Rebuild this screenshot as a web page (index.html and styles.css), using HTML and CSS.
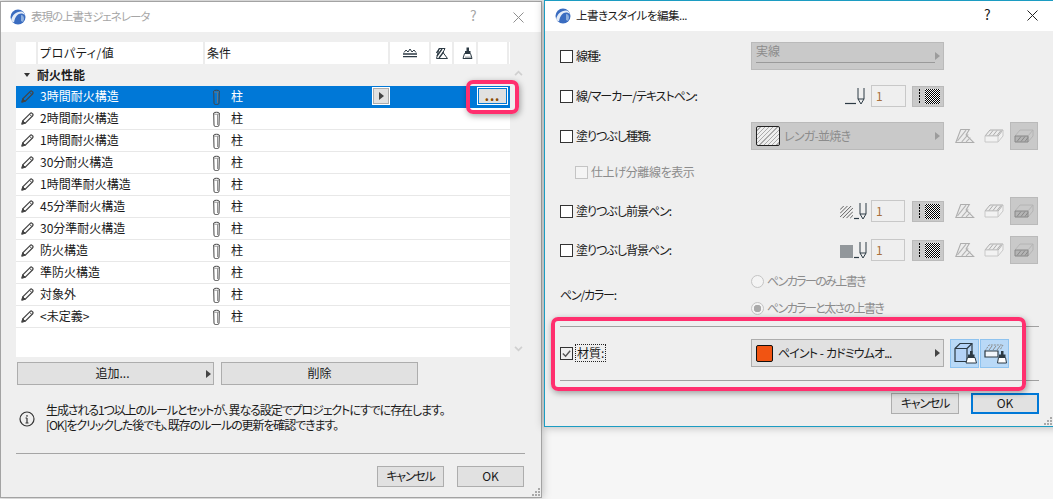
FILE: index.html
```html
<!DOCTYPE html>
<html lang="ja">
<head>
<meta charset="utf-8">
<title>表現の上書きジェネレータ</title>
<link rel="stylesheet" href="styles.css">
</head>
<body>
<svg class="sprite" width="0" height="0">
  <defs>
    <symbol id="logo" viewBox="0 0 16 16">
      <circle cx="8" cy="8" r="7.500" fill="#3a6cc0"/>
      <path d="M1 12C2 6 6 2.500 11 2.500c2 0 3.500 1.500 4 4-1-1.500-2.500-2-4-2-3 0-6 3-7 9z" fill="#e4ecf7"/>
      <path d="M11 6c2 0 3 1.500 3 4l-1 3-2-1z" fill="#8fb0dd"/>
    </symbol>
    <symbol id="x" viewBox="0 0 11 11">
      <path d="M.5.500l10 10M10.500.500l-10 10" fill="none" stroke="currentColor" stroke-width="1"/>
    </symbol>
    <symbol id="pencil" viewBox="0 0 13 13">
      <path d="M1 12l.8-3.200L9.300 1.300a1.200 1.200 0 0 1 1.700 0l.7.700a1.200 1.200 0 0 1 0 1.700L4.200 11.200z" fill="none" stroke="#444" stroke-width="1.200"/>
      <path d="M1 12l.8-3.200 2.400 2.400zM8.500 2.200l2.300 2.300" fill="#444" stroke="#444"/>
    </symbol>
    <symbol id="column" viewBox="0 0 7 16">
      <path d="M.7 2c0-1 5.600-1 5.600 0l-.3 12c0 1.500-1.200 1.500-2.500 1.500S1 15.500 1 14z" fill="none" stroke="#444" stroke-width="1"/>
      <path d="M1 2.800c1 .7 4 .7 5 0M4.500 3.500V14" fill="none" stroke="#777" stroke-width=".8"/>
    </symbol>
    <symbol id="line-tool" viewBox="0 0 14 10">
      <path d="M1 4.500l2-2.500 2 2 2-3 2 3 2-2 2 2.500" fill="none" stroke="#2c3a44" stroke-width="1"/>
      <path d="M0 6h14M0 8.700h14" stroke="#2c3a44" stroke-width="1.300"/>
    </symbol>
    <symbol id="surface" viewBox="0 0 12 11">
      <path d="M3 .5h6l-2 4 4.500 6H.5z" fill="#fff" stroke="#2c3a44"/>
      <path d="M1 8l5-7M3 10l4.500-6M.5 5l3-4.500" stroke="#2c3a44" stroke-width="1.300"/>
    </symbol>
    <symbol id="brush" viewBox="0 0 11 12">
      <path d="M4.500.5h2.500v3.500h1.500v2h-5.500V4h1.500z" fill="#2c3a44"/>
      <path d="M2.500 6.500h6l1.500 5H1z" fill="#fff" stroke="#2c3a44"/>
      <path d="M4 9.500v2M6 9.500v2M8 9.500v2" stroke="#2c3a44" stroke-width=".8"/>
    </symbol>
    <symbol id="pen" viewBox="0 0 20 18">
      <path d="M0 16.500h11" stroke="#2c3a44" stroke-width="1.200"/>
      <path d="M13 1v11h6V1M13 12l3 5 3-5" fill="none" stroke="#2c3a44"/>
    </symbol>
    <symbol id="pen-short" viewBox="0 0 13 18">
      <path d="M0 16.500h5" stroke="#2c3a44" stroke-width="1.200"/>
      <path d="M6 1v11h6V1M6 12l3 5 3-5" fill="none" stroke="#2c3a44"/>
    </symbol>
    <symbol id="hatch-lines" viewBox="0 0 14 14">
      <path d="M0 4l4-4M0 8l8-8M0 12L12 0M3 13L14 2M7 13l7-7M11 13l3-3" stroke="#555" stroke-width="1"/>
    </symbol>
    <symbol id="shape-a" viewBox="0 0 18 13">
      <path d="M5 .5h8l-3 5 7 7H.5z" fill="#ececec" stroke="#adadad"/>
      <path d="M2 11l8-10M6 12l6-7M10 12l4-4" stroke="#b4b4b4"/>
    </symbol>
    <symbol id="shape-b" viewBox="0 0 20 13">
      <path d="M1 6.500L6 .5h13l-5 6z" fill="#ececec" stroke="#adadad"/>
      <path d="M1 6.500h13v6H1zM14 12.500l5-6V.5" fill="#f2f2f2" stroke="#c8c8c8"/>
      <path d="M5 6l4-5M9 6l4-5M13 6l4-5" stroke="#adadad"/>
    </symbol>
    <symbol id="shape-c" viewBox="0 0 20 13">
      <path d="M1 6.500L6 .5h13l-5 6" fill="none" stroke="#b4b4b4"/>
      <path d="M14 12.500l5-6V.5" fill="none" stroke="#b4b4b4"/>
      <path d="M1 6.500h13v6H1z" fill="#b4b4b4" stroke="#888"/>
      <path d="M3 12l4-5M7 12l4-5M11 12l3-4" stroke="#888"/>
    </symbol>
    <symbol id="box-brush" viewBox="0 0 24 24">
      <path d="M2 7.500L7 2.500h12v13l-5 5H2z" fill="#b5d3f7" stroke="#2c3a44" stroke-width="1.200"/>
      <path d="M2 7.500h12v13M14 7.500l5-5" fill="none" stroke="#2c3a44" stroke-width="1.200"/>
      <path d="M17 10h2.500v3.500h2v2.500h-6.500v-2.500h2z" fill="#2c3a44"/>
      <path d="M14.500 16.500h7.500l1.500 5.500h-10.500z" fill="#fff" stroke="#2c3a44"/>
    </symbol>
    <symbol id="slab-brush" viewBox="0 0 24 24">
      <path d="M2 10L6 4h14l-3 5" fill="none" stroke="#8a8a8a" stroke-dasharray="2 1"/>
      <path d="M6 9l3-4M10 9l3-4M14 9l3-4" stroke="#8a8a8a"/>
      <path d="M2 10h13v6H2z" fill="#f2f6fb" stroke="#2c3a44" stroke-width="1.200"/>
      <path d="M18 10h2.500v3.500h2v2.500H16v-2.500h2z" fill="#2c3a44"/>
      <path d="M15.500 16.500H22.500l1 5.500H14.500z" fill="#fff" stroke="#2c3a44"/>
    </symbol>
    <symbol id="grip" viewBox="0 0 9 9">
      <path d="M7 1h2v2H7zM4 4h2v2H4zM7 4h2v2H7zM1 7h2v2H1zM4 7h2v2H4zM7 7h2v2H7z" fill="#a9a9a9"/>
    </symbol>
  </defs>
</svg>

<section class="window win-main">
  <header class="titlebar">
    <svg class="logo"><use href="#logo"/></svg>
    <span class="title title-muted">表現の上書きジェネレータ</span>
    <span class="help help-main">?</span>
    <svg class="close close-main"><use href="#x"/></svg>
  </header>
  <div class="main-body">
    <div class="list-area">
      <div class="list">
        <div class="list-head">
          <span class="hcell hc-icon"></span>
          <span class="hcell hc-name">プロパティ/値</span>
          <span class="hcell hc-cond">条件</span>
          <span class="hcell hc-a"><svg class="hi-line"><use href="#line-tool"/></svg></span>
          <span class="hcell hc-b"><svg class="hi-surface"><use href="#surface"/></svg></span>
          <span class="hcell hc-c"><svg class="hi-brush"><use href="#brush"/></svg></span>
          <span class="hcell hc-d"></span>
        </div>
        <div class="group-row"><span class="tri-down"></span><span class="txt">耐火性能</span></div>
        <div class="row row-selected">
          <svg class="pencil"><use href="#pencil"/></svg>
          <span class="name">3時間耐火構造</span>
          <svg class="column"><use href="#column"/></svg>
          <span class="cond">柱</span>
          <span class="row-arrow"><i class="tri-right tri-dark"></i></span>
          <span class="row-more"><b>...</b></span>
        </div>
        <div class="row"><svg class="pencil"><use href="#pencil"/></svg><span class="name">2時間耐火構造</span><svg class="column"><use href="#column"/></svg><span class="cond">柱</span></div>
        <div class="row"><svg class="pencil"><use href="#pencil"/></svg><span class="name">1時間耐火構造</span><svg class="column"><use href="#column"/></svg><span class="cond">柱</span></div>
        <div class="row"><svg class="pencil"><use href="#pencil"/></svg><span class="name">30分耐火構造</span><svg class="column"><use href="#column"/></svg><span class="cond">柱</span></div>
        <div class="row"><svg class="pencil"><use href="#pencil"/></svg><span class="name">1時間準耐火構造</span><svg class="column"><use href="#column"/></svg><span class="cond">柱</span></div>
        <div class="row"><svg class="pencil"><use href="#pencil"/></svg><span class="name">45分準耐火構造</span><svg class="column"><use href="#column"/></svg><span class="cond">柱</span></div>
        <div class="row"><svg class="pencil"><use href="#pencil"/></svg><span class="name">30分準耐火構造</span><svg class="column"><use href="#column"/></svg><span class="cond">柱</span></div>
        <div class="row"><svg class="pencil"><use href="#pencil"/></svg><span class="name">防火構造</span><svg class="column"><use href="#column"/></svg><span class="cond">柱</span></div>
        <div class="row"><svg class="pencil"><use href="#pencil"/></svg><span class="name">準防火構造</span><svg class="column"><use href="#column"/></svg><span class="cond">柱</span></div>
        <div class="row"><svg class="pencil"><use href="#pencil"/></svg><span class="name">対象外</span><svg class="column"><use href="#column"/></svg><span class="cond">柱</span></div>
        <div class="row"><svg class="pencil"><use href="#pencil"/></svg><span class="name">&lt;未定義&gt;</span><svg class="column"><use href="#column"/></svg><span class="cond">柱</span></div>
      </div>
      <div class="scroll">
        <svg class="chev" viewBox="0 0 10 7"><path d="M1 6l4-4 4 4" fill="none" stroke="#d0d0d0" stroke-width="2"/></svg>
        <svg class="chev" viewBox="0 0 10 7"><path d="M1 1l4 4 4-4" fill="none" stroke="#d0d0d0" stroke-width="2"/></svg>
      </div>
    </div>
    <div class="list-actions">
      <button class="btn btn-wide btn-add">追加...<i class="tri-right tri-dark tri-add"></i></button>
      <button class="btn btn-wide">削除</button>
    </div>
    <div class="notice">
      <svg class="info" viewBox="0 0 16 16"><circle cx="8" cy="8" r="7" fill="none" stroke="#333" stroke-width="1.200"/><path d="M8 4v1.800M8 7v5M6.500 7H8M6.500 12h3" fill="none" stroke="#333" stroke-width="1.200"/></svg>
      <p class="notice-text">生成される1つ以上のルールとセットが、異なる設定でプロジェクトにすでに存在します。<br>[OK]をクリックした後でも、既存のルールの更新を確認できます。</p>
    </div>
    <div class="main-footer">
      <button class="btn btn-foot btn-kana">キャンセル</button>
      <button class="btn btn-foot">OK</button>
    </div>
  </div>
  <svg class="grip"><use href="#grip"/></svg>
</section>

<div class="highlight hl-more"></div>

<section class="window win-edit">
  <header class="titlebar">
    <svg class="logo logo-edit"><use href="#logo"/></svg>
    <span class="title title-edit">上書きスタイルを編集...</span>
    <span class="help help-edit">?</span>
    <svg class="close close-edit"><use href="#x"/></svg>
  </header>
  <div class="edit-body">
    <div class="frow f1">
      <label class="flabel"><i class="check"></i><span class="txt">線種:</span></label>
      <div class="select select-line"><span class="select-text">実線</span><i class="tri-right tri-light tri-end"></i></div>
    </div>
    <div class="frow f2">
      <label class="flabel"><i class="check"></i><span class="txt">線/マーカー/テキストペン:</span></label>
      <div class="pen-group">
        <svg class="pen"><use href="#pen"/></svg>
        <span class="pen-num">1</span>
        <span class="pen-swatch"><i class="dots"></i><i class="checker"></i></span>
      </div>
    </div>
    <div class="frow f3">
      <label class="flabel"><i class="check"></i><span class="txt">塗りつぶし種類:</span></label>
      <div class="select"><i class="fill-swatch"></i><span class="select-text text-fill">レンガ-並焼き</span><i class="tri-right tri-light tri-end"></i></div>
      <div class="shapes">
        <svg class="shape"><use href="#shape-a"/></svg>
        <svg class="shape"><use href="#shape-b"/></svg>
        <span class="shape-on"><svg class="shape"><use href="#shape-c"/></svg></span>
      </div>
    </div>
    <div class="frow f4">
      <label class="flabel sublabel"><i class="check check-off"></i><span class="txt txt-sub">仕上げ分離線を表示</span></label>
    </div>
    <div class="frow f5">
      <label class="flabel"><i class="check"></i><span class="txt">塗りつぶし前景ペン:</span></label>
      <div class="pen-group pen-group-s">
        <svg class="hatch"><use href="#hatch-lines"/></svg>
        <svg class="pen-s"><use href="#pen-short"/></svg>
        <span class="pen-num pen-num-s">1</span>
        <span class="pen-swatch pen-swatch-s"><i class="dots"></i><i class="checker"></i></span>
      </div>
      <div class="shapes">
        <svg class="shape"><use href="#shape-a"/></svg>
        <svg class="shape"><use href="#shape-b"/></svg>
        <span class="shape-on"><svg class="shape"><use href="#shape-c"/></svg></span>
      </div>
    </div>
    <div class="frow f6">
      <label class="flabel"><i class="check"></i><span class="txt">塗りつぶし背景ペン:</span></label>
      <div class="pen-group pen-group-s">
        <i class="solid"></i>
        <svg class="pen-s"><use href="#pen-short"/></svg>
        <span class="pen-num pen-num-s">1</span>
        <span class="pen-swatch pen-swatch-s"><i class="dots"></i><i class="checker"></i></span>
      </div>
      <div class="shapes">
        <svg class="shape"><use href="#shape-a"/></svg>
        <svg class="shape"><use href="#shape-b"/></svg>
        <span class="shape-on"><svg class="shape"><use href="#shape-c"/></svg></span>
      </div>
    </div>
    <div class="frow f7">
      <span class="flabel plain"><span class="txt txt-plain">ペン/カラー:</span></span>
      <div class="radios">
        <span class="radio-line"><i class="radio"></i><span class="txt txt-radio">ペンカラーのみ上書き</span></span>
        <span class="radio-line"><i class="radio radio-on"></i><span class="txt txt-radio">ペンカラーと太さの上書き</span></span>
      </div>
    </div>
    <hr class="sep sep-a">
    <div class="frow f8">
      <label class="flabel"><i class="check check-on"><svg viewBox="0 0 12 12"><path d="M2 6l3 3 5-6" fill="none" stroke="#555" stroke-width="1.500"/></svg></i><span class="txt focus">材質:</span></label>
      <div class="select select-on"><i class="color-swatch"></i><span class="select-text text-on">ペイント - カドミウムオ...</span><i class="tri-right tri-dark tri-end"></i></div>
      <div class="toggles">
        <span class="toggle"><svg class="toggle-icon"><use href="#box-brush"/></svg></span>
        <span class="toggle"><svg class="toggle-icon"><use href="#slab-brush"/></svg></span>
      </div>
    </div>
    <hr class="sep sep-b">
    <div class="edit-footer">
      <button class="btn btn-foot btn-edit btn-kana">キャンセル</button>
      <button class="btn btn-foot btn-edit btn-default">OK</button>
    </div>
  </div>
  <svg class="grip"><use href="#grip"/></svg>
</section>

<div class="highlight hl-material"></div>
</body>
</html>
```
FILE: styles.css
```css
* { box-sizing: border-box; }
html, body { margin: 0; height: 100%; }
body {
  position: relative;
  width: 1053px;
  height: 499px;
  overflow: hidden;
  background: #f6f6f6;
  font-family: "Noto Sans CJK JP", "Noto Sans", sans-serif;
  font-size: 12px;
  line-height: 15px;
  color: #1a1a1a;
  font-feature-settings: "palt";
}
.sprite { position: absolute; }
i { display: block; font-style: normal; }
.txt { padding-bottom: 2px; }

.window {
  position: absolute;
  display: flex;
  flex-direction: column;
  background: #efefef;
  box-shadow: 0 0 9px rgba(0, 0, 0, .28);
}
.win-main { left: 0; top: 1px; width: 542px; height: 497px; border: 1px solid #a3a3a3; }
.win-edit { left: 544px; top: 0; width: 520px; height: 427px; border: 1px solid #1c9cc2; }

.titlebar {
  position: relative;
  flex: none;
  display: flex;
  align-items: center;
  height: 30px;
  background: #fff;
  font-size: 11.500px;
}
.logo { width: 16px; height: 16px; margin-left: 9px; }
.logo-edit { margin-left: 10px; }
.title { margin-left: 5px; padding-bottom: 2px; letter-spacing: -.5px; }
.title-muted { color: #a6a6a6; letter-spacing: -1px; }
.help, .close { position: absolute; }
.help { top: 6px; font-size: 14px; }
.close { width: 11px; height: 11px; top: 10px; }
.help-main { left: 469px; color: #a6a6a6; }
.close-main { left: 512px; color: #8f8f8f; }
.help-edit { left: 439px; }
.close-edit { left: 482px; top: 9px; color: #222; }

/* main dialog */
.main-body { flex: 1; display: flex; flex-direction: column; padding: 10px 15px 0; }
.list-area { display: flex; height: 315px; }
.list { width: 494px; background: #fff; }
.scroll { flex: none; width: 16px; padding: 28px 3px 5px; display: flex; flex-direction: column; justify-content: space-between; align-items: center; }
.chev { width: 9px; height: 6px; }

.list-head { display: flex; height: 22px; background: #fff; margin-right: 1px; }
.hcell { display: flex; align-items: center; justify-content: center; height: 22px; border-right: 2px solid #ececec; }
.hc-icon { width: 22px; }
.hc-name { width: 167px; justify-content: flex-start; padding: 0 0 2px 2px; letter-spacing: .6px; }
.hc-cond { width: 185px; justify-content: flex-start; padding: 0 0 2px 2px; }
.hc-a { width: 41px; }
.hc-b { width: 23px; }
.hc-c { width: 24px; padding-left: 4px; }
.hc-d { width: 31px; }
.hi-line { width: 14px; height: 10px; }
.hi-surface { width: 12px; height: 11px; }
.hi-brush { width: 11px; height: 12px; }

.group-row { display: flex; align-items: center; height: 22px; background: #f0f0f0; font-weight: 700; padding-left: 8px; gap: 7px; }
.tri-down { display: block; width: 0; height: 0; border: 3.500px solid transparent; border-top: 4px solid #333; border-bottom: 0; }

.row { position: relative; display: flex; align-items: center; height: 22px; border-bottom: 1px solid #e8e8e8; }
.row-selected { background: #0078d7; color: #fff; border-bottom-color: #0078d7; }
.pencil { flex: none; width: 13px; height: 13px; margin-left: 5px; }
.name { width: 173px; margin-left: 6px; padding-bottom: 2px; }
.column { flex: none; width: 7px; height: 16px; }
.cond { margin-left: 11px; padding-bottom: 2px; }
.row-arrow {
  position: absolute; left: 356px; top: 1px; width: 18px; height: 18px;
  display: flex; align-items: center; justify-content: center;
  background: #e1e1e1; border: 1px solid #fff; outline: 1px solid #adadad; outline-offset: -2px;
}
.row-more {
  position: absolute; left: 461px; top: 1px; width: 31px; height: 18px;
  background: #e1e1e1; border: 1px solid #fff; outline: 1px solid #0078d7; outline-offset: -2px;
  color: #8a4b00; font-weight: 700; text-align: center; line-height: 16px; font-size: 12px; letter-spacing: 1px;
}

.tri-right { width: 0; height: 0; border: 4.500px solid transparent; border-left: 5px solid #444; border-right: 0; }
.tri-dark { border-left-color: #444; }
.tri-light { border-left-color: #9c9c9c; }
.tri-end { position: absolute; right: 3px; top: 50%; margin-top: -4px; }

.btn {
  position: relative;
  height: 23px;
  padding: 0 0 2px;
  background: #e1e1e1;
  border: 1px solid #adadad;
  color: #1a1a1a;
  font: inherit;
  font-feature-settings: inherit;
  text-align: center;
}
.btn-kana { letter-spacing: -1.200px; }
.list-actions { display: flex; gap: 7px; margin: 5px 0 0 1px; }
.btn-wide { width: 197px; }
.btn-add { padding-right: 6px; }
.tri-add { position: absolute; right: 2px; top: 7px; }

.notice { display: flex; align-items: center; height: 30px; margin-top: 17px; padding-left: 3px; }
.info { flex: none; width: 16px; height: 16px; margin-right: 11px; margin-top: 3px; }
.notice-text { margin: 0; letter-spacing: -1.100px; }

.main-footer {
  display: flex;
  justify-content: flex-end;
  gap: 13px;
  height: 34px;
  margin-top: 21px;
  padding: 12px 1px 0 0;
  border-top: 1px solid #a5a5a5;
  width: 509px;
}
.btn-foot { width: 67px; height: 21px; line-height: 17px; }

.grip { position: absolute; right: 1px; bottom: 1px; width: 9px; height: 9px; }
.win-edit .grip { right: 11px; }

/* edit dialog */
.edit-body { flex: 1; padding: 11px 0 0 15px; }
.frow { display: flex; align-items: center; height: 28px; position: relative; }
.f2, .f3 { margin-top: 12px; }
.f4 { margin-top: 8px; }
.f5 { margin-top: 11px; }
.f6 { margin-top: 11px; }
.f7 { margin-top: 6px; height: 50px; }
.f8 { margin-top: 12px; }
.flabel { flex: none; display: flex; align-items: center; width: 191px; gap: 3px; letter-spacing: -1px; }
.sublabel { padding-left: 15px; color: #8c8c8c; }
.txt-sub { letter-spacing: -.4px; }
.txt-plain { letter-spacing: -1.200px; }
.check { flex: none; width: 13px; height: 13px; background: #fff; border: 1px solid #333; }
.check-off { border-color: #c4c4c4; background: #f4f4f4; }
.check-on { background: #efefef; }
.check-on svg { display: block; width: 11px; height: 11px; }
.focus { outline: 1px dotted #222; padding: 0 1px 1px; letter-spacing: 0; }

.select {
  position: relative;
  flex: none;
  display: flex;
  align-items: center;
  width: 193px;
  height: 28px;
  padding-left: 4px;
  background: #c9c9c9;
  border: 1px solid #bababa;
  color: #8c8c8c;
}
.select-text { padding-bottom: 2px; }
.select-line { align-items: flex-start; line-height: 16px; }
.select-line::after { content: ""; position: absolute; left: 4px; right: 8px; top: 19px; height: 1px; background: #9a9a9a; }
.fill-swatch {
  width: 24px; height: 20px; margin-right: 4px; border: 1px solid #222; border-radius: 2px;
  background: repeating-linear-gradient(135deg, #eee 0 2px, #aaa 2px 3px);
}
.text-fill { letter-spacing: -.7px; }
.select-on { background: #e1e1e1; border-color: #adadad; color: #1a1a1a; }
.color-swatch { width: 17px; height: 17px; margin-right: 5px; background: #f15412; border: 1px solid #111; border-radius: 2px; }
.text-on { white-space: pre; letter-spacing: -.9px; word-spacing: 1px; }

.pen-group { display: flex; align-items: center; margin-left: 94px; }
.pen-group-s { margin-left: 89px; }
.pen { width: 20px; height: 18px; margin-right: 6px; }
.pen-s { width: 13px; height: 18px; margin-right: 4px; margin-left: 1px; }
.hatch { width: 13px; height: 13px; margin-top: 3px; }
.solid { width: 13px; height: 13px; margin-top: 3px; background: #92979b; }
.pen-num {
  width: 35px; height: 22px; padding-left: 4px; line-height: 20px;
  background: #efefef; border: 1px solid #c8c8c8; color: #a9713e; font-size: 12px;
}
.pen-num-s { width: 34px; }
.pen-swatch {
  display: flex; align-items: center; justify-content: space-between;
  width: 32px; height: 21px; margin-left: 6px; padding: 0 3px 0 6px;
  background: #c9c9c9; border: 1px solid #bababa;
}
.pen-swatch-s { margin-left: 7px; }
.dots { width: 1px; height: 15px; background: repeating-linear-gradient(#000 0 2px, transparent 2px 3px); }
.checker { width: 15px; height: 15px; background: repeating-conic-gradient(#000 0 25%, #fff 0 50%) 0 0 / 2px 2px; }

.shapes { display: flex; align-items: center; margin-left: 11px; }
.shape { width: 20px; height: 14px; flex: none; }
.shapes > .shape + .shape { margin-left: 9px; }
.shape-on {
  display: flex; align-items: center; justify-content: center;
  width: 28px; height: 28px; margin-left: 6px;
  background: #c9c9c9; border: 1px solid #bababa;
}

.radios { display: flex; flex-direction: column; gap: 10px; color: #8c8c8c; }
.radio-line { display: flex; align-items: center; gap: 3px; }
.txt-radio { letter-spacing: -1.600px; }
.radio { width: 13px; height: 13px; border-radius: 50%; background: #f4f4f4; border: 1px solid #c4c4c4; }
.radio-on { background: radial-gradient(circle, #aaa 0 3.500px, #f4f4f4 4px); }

.sep { display: block; height: 1px; margin: 0; border: 0; background: #a0a0a0; width: 479px; }
.sep-a { margin-top: 6px; }
.sep-b { margin-top: 13px; }
.toggles { display: flex; gap: 1px; margin-left: 6px; }
.toggle {
  display: flex; align-items: center; justify-content: center;
  width: 29px; height: 29px;
  background: #b9d9f7; border: 1px solid #8fc3ef;
}
.toggle-icon { width: 24px; height: 24px; }
.edit-footer { display: flex; justify-content: flex-end; gap: 12px; width: 479px; margin-top: 12px; }
.btn-edit { width: 68px; }
.btn-default { border: 2px solid #0078d7; line-height: 15px; }

/* annotations */
.highlight {
  position: absolute;
  border: 4px solid #ff2f6e;
  border-radius: 7px;
  box-shadow: 1px 2px 6px rgba(0, 0, 0, .35);
}
.hl-more { left: 466px; top: 80px; width: 53px; height: 34px; }
.hl-material { left: 551px; top: 317px; width: 475px; height: 74px; }
```
